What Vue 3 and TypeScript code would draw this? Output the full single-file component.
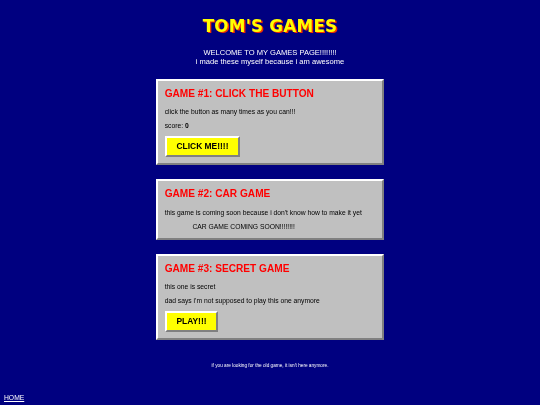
<script setup lang="ts">
import { ref } from 'vue'
const score = ref(0)
</script>

<template>
  <div class="page">
    <h1 class="title">TOM'S GAMES</h1>
    <p class="welcome">WELCOME TO MY GAMES PAGE!!!!!!!!<br />i made these myself because i am awesome</p>

    <section class="card">
      <h2>GAME #1: CLICK THE BUTTON</h2>
      <p>click the button as many times as you can!!!</p>
      <p>score: <b>{{ score }}</b></p>
      <button class="btn btn-wide" @click="score++">CLICK ME!!!!</button>
    </section>

    <section class="card">
      <h2>GAME #2: CAR GAME</h2>
      <p>this game is coming soon because i don't know how to make it yet</p>
      <p class="soon">CAR GAME COMING SOON!!!!!!!!</p>
    </section>

    <section class="card">
      <h2>GAME #3: SECRET GAME</h2>
      <p>this one is secret</p>
      <p>dad says i'm not supposed to play this one anymore</p>
      <button class="btn">PLAY!!!</button>
    </section>

    <p class="note">if you are looking for the old game, it isn't here anymore.</p>
    <a class="home" href="#">HOME</a>
  </div>
</template>

<style>
html, body { margin: 0; background: #000080; }
</style>

<style scoped>
.page {
  position: relative;
  box-sizing: border-box;
  width: 540px;
  height: 405px;
  padding-top: 15px;
  background: #000080;
  font-family: "Liberation Sans", Arial, sans-serif;
  overflow: hidden;
  filter: blur(0.4px);
}
.title {
  margin: 0;
  text-align: center;
  font-family: "DejaVu Sans", sans-serif;
  font-size: 16.8px;
  line-height: 22px;
  letter-spacing: 0.2px;
  font-weight: 700;
  color: #ffff00;
  text-shadow: 1.4px 1.4px 0 #f03000;
}
.welcome {
  margin: 11px 0 0;
  text-align: center;
  color: #fff;
  font-size: 7.56px;
  line-height: 9px;
}
.card {
  box-sizing: border-box;
  width: 228.6px;
  margin: 12.7px auto 13.6px;
  padding: 7.15px 7px 6.7px;
  background: #c0c0c0;
  border: 2px solid;
  border-color: #fff #808080 #808080 #fff;
  color: #000;
}
.card + .card { margin-top: 0; }
h2 {
  margin: 0 0 7.3px;
  color: #ff0000;
  font-size: 10.12px;
  line-height: 12px;
  font-weight: 700;
}
p { margin: 0 0 5.2px; font-size: 6.75px; line-height: 9px; }
.soon { margin-left: 27.7px; margin-bottom: 0.7px; }
.btn {
  display: block;
  box-sizing: border-box;
  height: 20.7px;
  width: 53.6px;
  margin-top: 5.8px;
  padding: 0;
  background: #ffff00;
  border: 2px solid;
  border-color: #fff #808080 #808080 #fff;
  font-family: inherit;
  font-size: 8.44px;
  font-weight: 700;
  color: #000;
}
.btn-wide { width: 75.6px; }
.note {
  margin: 22.2px 0 0;
  text-align: center;
  color: #fff;
  font-size: 4.72px;
  line-height: 6px;
}
.home {
  position: absolute;
  left: 4px;
  bottom: 3px;
  color: #fff;
  font-size: 6.75px;
  line-height: 9px;
}
</style>
